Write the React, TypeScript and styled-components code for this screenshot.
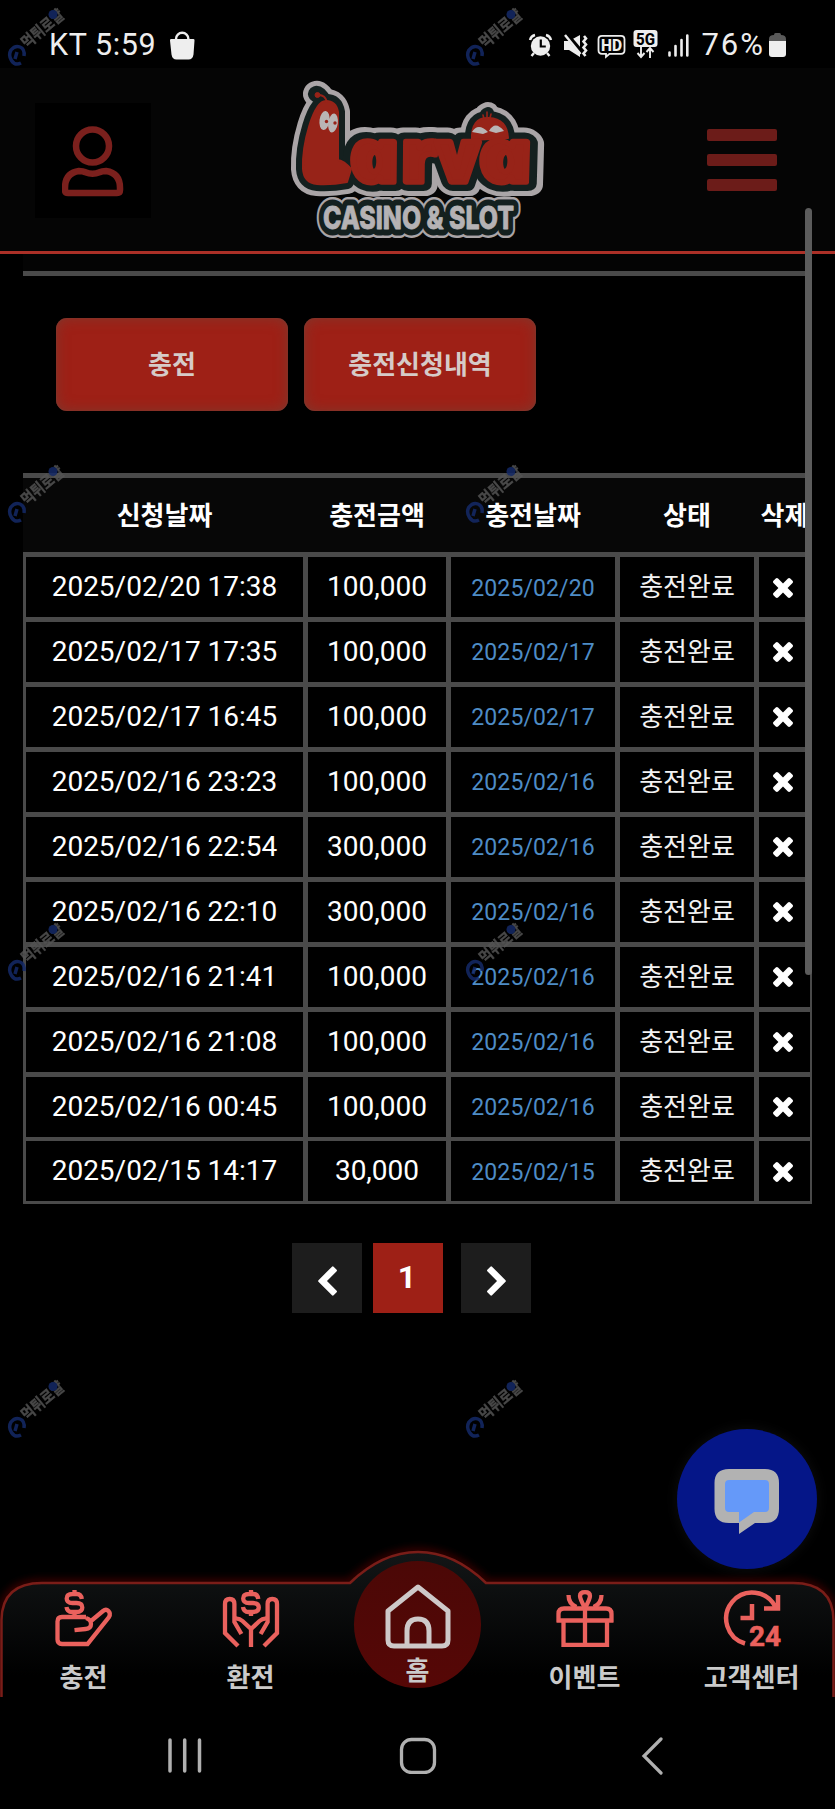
import React from 'react';
import styled, { createGlobalStyle } from 'styled-components';

const GlobalStyle = createGlobalStyle`
  * {
    box-sizing: border-box;
  }

  body {
    margin: 0;
    background: #000;
    font-family: Roboto, 'Noto Sans CJK KR', sans-serif;
    color: #fff;
  }
`;

const Screen = styled.div`
  position: relative;
  display: flex;
  flex-direction: column;
  width: 835px;
  height: 1809px;
  background: #000;
  overflow: hidden;
`;

const StatusBar = styled.div`
  display: flex;
  align-items: center;
  height: 68px;
  padding: 22px 48px 0 49px;
  color: #eee;
`;

const StatusText = styled.span<{ $battery?: boolean }>`
  margin-left: ${props => (props.$battery ? '9px' : '0')};
  font-size: ${props => (props.$battery ? '31px' : '30.5px')};
  line-height: 44px;
  height: 44px;
  letter-spacing: ${props => (props.$battery ? '2px' : '0.6px')};
  white-space: nowrap;
`;

const StatusIcons = styled.div`
  display: flex;
  align-items: center;
  margin-left: auto;
`;

const Header = styled.header`
  display: flex;
  align-items: flex-start;
  justify-content: space-between;
  height: 186px;
  padding: 35px 58px 0 35px;
  background: #050505;
  border-bottom: 3px solid #ab3027;
`;

const UserButton = styled.button`
  display: flex;
  align-items: center;
  justify-content: center;
  width: 116px;
  height: 115px;
  padding: 1px 0 0;
  background: #000;
  border: none;
`;

const LogoWrap = styled.div`
  margin-top: -33px;
  margin-left: -22px;
  height: 175px;
`;

const MenuButton = styled.button`
  display: flex;
  flex-direction: column;
  gap: 13px;
  width: 70px;
  margin-top: 26px;
  padding: 0;
  background: none;
  border: none;
`;

const MenuLine = styled.span`
  height: 12px;
  background: #6c1c19;
  border-radius: 2px;
`;

const Content = styled.main`
  height: 1298px;
  padding: 0 23px;
`;

const TopStrip = styled.div`
  height: 22px;
  background: #040404;
  border-bottom: 5px solid #4a4a4a;
`;

const TabRow = styled.div`
  display: flex;
  gap: 16px;
  padding: 42px 33px 62px;
`;

const Tab = styled.button`
  width: 232px;
  height: 93px;
  padding: 0 0 4px;
  border: none;
  border-radius: 11px;
  background: #9e2016;
  box-shadow: inset 0 0 14px rgba(110, 70, 60, 0.6), inset 0 0 2px rgba(110, 70, 60, 0.9);
  color: #d6cbc8;
  font-family: inherit;
  font-size: 26px;
  font-weight: 700;
`;

const columns = '277px 138px 164px 134px 51px';

const TableHead = styled.div`
  display: grid;
  grid-template-columns: ${columns};
  column-gap: 5px;
  height: 79px;
  padding: 0 2px 0 3px;
  background: #070707;
  border-top: 5px solid #4a4a4a;
`;

const HeadCell = styled.div`
  display: flex;
  align-items: center;
  justify-content: center;
  padding-bottom: 4px;
  font-size: 26px;
  font-weight: 700;
  white-space: nowrap;
`;

const TableBody = styled.div`
  display: grid;
  grid-template-columns: ${columns};
  grid-auto-rows: 60px;
  gap: 4.95px 5px;
  padding: 5px 2px 3px 3px;
  background: #4a4a4a;
`;

const Cell = styled.div`
  display: flex;
  align-items: center;
  justify-content: center;
  background: #000;
  font-size: 28px;
  line-height: 60px;
  white-space: nowrap;
`;

const DateLink = styled.a`
  padding-top: 3px;
  color: #4e8cc6;
  font-size: 23px;
  letter-spacing: 0.1px;
`;

const State = styled.span`
  color: #f2f2f2;
  font-size: 26px;
`;

const Pagination = styled.nav`
  display: flex;
  margin: 39px 0 0 269px;
`;

const PageButton = styled.button<{ $active?: boolean }>`
  display: flex;
  align-items: center;
  justify-content: center;
  width: 70px;
  height: 70px;
  padding: ${props => (props.$active ? '0 2px 2px 0' : '5px 0 0')};
  margin-right: ${props => (props.$active ? '18px' : '11px')};
  border: none;
  background: ${props => (props.$active ? '#9e2016' : '#1d1d1d')};
  color: #fff;
  font-family: inherit;
  font-size: 32px;
  font-weight: 700;
`;

const BottomNav = styled.nav`
  position: relative;
  display: grid;
  grid-template-columns: repeat(5, 1fr);
  height: 145px;
`;

const NavShape = styled.svg`
  position: absolute;
  left: 0;
  top: -12px;
`;

const NavItem = styled.a<{ $home?: boolean }>`
  position: relative;
  display: flex;
  flex-direction: column;
  align-items: center;
  padding-top: ${props => (props.$home ? '32px' : '38px')};
  color: #cacaca;
  font-size: 26px;
  font-weight: 700;
  line-height: 30px;

  svg {
    overflow: visible;
  }

  span {
    margin-top: ${props => (props.$home ? '7px' : '16px')};
  }
`;

const SystemNav = styled.div`
  display: flex;
  align-items: flex-start;
  gap: 196px;
  padding: 40px 0 0 167px;
  height: 112px;

  svg:last-child {
    margin-left: 7px;
  }
`;

const ChatButton = styled.button`
  position: absolute;
  left: 677px;
  top: 1429px;
  width: 140px;
  height: 140px;
  padding: 0;
  border: none;
  border-radius: 50%;
  background: #051688;
  box-shadow: 0 0 14px rgba(30, 30, 30, 0.5);
`;

const ScrollThumb = styled.div`
  position: absolute;
  left: 805px;
  top: 208px;
  width: 7px;
  height: 767px;
  border-radius: 4px;
  background: #5c5c5c;
`;

const Mark = styled.svg`
  position: absolute;
  overflow: visible;
  opacity: 0.85;
  pointer-events: none;
`;

const rows = [
  { requested: '2025/02/20 17:38', amount: '100,000', date: '2025/02/20' },
  { requested: '2025/02/17 17:35', amount: '100,000', date: '2025/02/17' },
  { requested: '2025/02/17 16:45', amount: '100,000', date: '2025/02/17' },
  { requested: '2025/02/16 23:23', amount: '100,000', date: '2025/02/16' },
  { requested: '2025/02/16 22:54', amount: '300,000', date: '2025/02/16' },
  { requested: '2025/02/16 22:10', amount: '300,000', date: '2025/02/16' },
  { requested: '2025/02/16 21:41', amount: '100,000', date: '2025/02/16' },
  { requested: '2025/02/16 21:08', amount: '100,000', date: '2025/02/16' },
  { requested: '2025/02/16 00:45', amount: '100,000', date: '2025/02/16' },
  { requested: '2025/02/15 14:17', amount: '30,000', date: '2025/02/15' },
];

const headings = ['신청날짜', '충전금액', '충전날짜', '상태', '삭제'];

const markPositions = [0, 457, 915, 1372].flatMap(top => [
  { top, left: 0 },
  { top, left: 458 },
]);

const BagIcon = () => (
  <svg width="27" height="29" viewBox="0 0 27 29" style={{ marginLeft: 13 }}>
    <path d="M7 10V8a6.2 6.2 0 0 1 12.4 0v2" fill="none" stroke="#eee" strokeWidth="2.4" />
    <path d="M2 8h22.500q1.300 0 1 1.500l-1 14q-.8 5-5 5H7.500q-4.200 0-5-5L1 9.500Q.7 8 2 8z" fill="#eee" />
  </svg>
);

// alarm, mute, HD voice, 5G and signal bars share one strip
const SignalIcons = () => (
  <svg width="164" height="32" viewBox="528 28 164 32" fill="#eee">
    <circle cx="540.500" cy="45" r="9.700" />
    <path d="M530 39q1-4 5-5M551 39q-1-4-5-5M534 52l-2.500 3M547 52l2.500 3" stroke="#eee" strokeWidth="2.400" fill="none" />
    <path d="M540.800 38.500v7h5" stroke="#000" strokeWidth="2.200" fill="none" />

    <path d="M564 40h5l11-6v22l-11-7h-5z" />
    <path d="M566 33l17 20" stroke="#000" strokeWidth="5" />
    <path d="M565 34l15.500 19" stroke="#eee" strokeWidth="2.400" />
    <path d="M584 35l2 2.500-2.500 3 2.500 3-2.500 3 2.500 3-2.500 3 2 2.500" stroke="#eee" strokeWidth="2.600" fill="none" />

    <path d="M602 34.800h19q3.500 0 3.500 3.500v11q0 3.500-3.500 3.500h-11.500l-3.500 3v-3h-4q-3.500 0-3.500-3.500v-11q0-3.500 3.500-3.500z" fill="none" stroke="#eee" strokeWidth="1.800" />
    <text x="601" y="49.500" fontFamily="Roboto, sans-serif" fontWeight="800" fontSize="16" textLength="21" lengthAdjust="spacingAndGlyphs">HD</text>

    <rect x="633.500" y="29" width="24" height="17" rx="3" />
    <text x="636" y="43.500" fontFamily="Roboto, sans-serif" fontWeight="800" fontSize="16" textLength="19" lengthAdjust="spacingAndGlyphs" fill="#000">5G</text>
    <path d="M641 46v9.500M637.500 52l3.500 4 3.500-4M650 57v-9.500M646.500 51l3.500-4 3.500 4" stroke="#eee" strokeWidth="1.900" fill="none" />

    <path d="M669.500 51.500v3M675.500 45v9.500M681.500 39v15.500M687.300 34.500v20" stroke="#eee" strokeWidth="2.600" strokeLinecap="round" />
  </svg>
);

const BatteryIcon = () => (
  <svg width="18" height="26" viewBox="0 0 18 26" style={{ marginLeft: 4 }}>
    <path d="M5 3q0-2 1.500-2h4q1.500 0 1.500 2 5 0 5 4v3H0V7q0-4 5-4z" fill="#5a5a5a" />
    <path d="M0 9h17v13q0 3-3 3H3q-3 0-3-3z" fill="#eee" />
  </svg>
);

const UserIcon = () => (
  <svg width="62" height="71" viewBox="0 0 62 71" fill="none" stroke="#7b201d" strokeWidth="6.500">
    <circle cx="30.500" cy="20" r="16.500" />
    <path d="M17 45q4 0 6.500 1.200 7 3 14 0Q40 45 44 45q14 2 14 17v2q0 3-3 3H6q-3 0-3-3v-2q0-15 14-17z" strokeLinejoin="round" />
  </svg>
);

const Logo = () => (
  <svg width="275" height="175" viewBox="0 0 275 175">
    <defs>
      <g id="worms">
        <path d="M45 31C32 31 21 75 22 99Q23 113 36 114Q50 115 66 112L70 99Q63 91 57 90L57 42Q55 31 45 31z" />
        <path d="M191 70Q190 47 208 48Q226 49 227 68z" />
      </g>
      {/* the skew stands the italic letters upright */}
      <g id="letters" transform="translate(0 112) skewX(13)" fontFamily="'Open Sans', sans-serif" fontStyle="italic" fontWeight="800" fontSize="73">
        <text x="73" y="0" textLength="50" lengthAdjust="spacingAndGlyphs">a</text>
        <text x="124" y="0" textLength="36" lengthAdjust="spacingAndGlyphs">r</text>
        <text x="161" y="0" textLength="42" lengthAdjust="spacingAndGlyphs">v</text>
        <text x="202" y="0" textLength="54" lengthAdjust="spacingAndGlyphs">a</text>
      </g>
      <text id="sub" x="42" y="159" fontFamily="Inter, sans-serif" fontWeight="800" fontSize="31" textLength="191" lengthAdjust="spacingAndGlyphs">CASINO &amp; SLOT</text>
    </defs>
    <g strokeLinejoin="round" strokeLinecap="round">
      <g fill="#aaa5a7" stroke="#aaa5a7">
        <path d="M43 32Q38 23 35 24" strokeWidth="26" fill="none" />
        <path d="M205 44l2-1" strokeWidth="22" />
        <use href="#worms" strokeWidth="24" />
        <use href="#letters" strokeWidth="28" />
      </g>
      <g fill="#14201f" stroke="#14201f">
        <path d="M43 32Q38 23 35 24" strokeWidth="16" fill="none" />
        <path d="M205 44l2-1" strokeWidth="12" />
        <use href="#worms" strokeWidth="14" />
        <use href="#letters" strokeWidth="18" />
      </g>
      <g fill="#972318" stroke="#972318">
        <use href="#worms" strokeWidth="2" />
        <use href="#letters" strokeWidth="5.500" />
        <path d="M46 32Q44 24 36 25" strokeWidth="2" fill="none" />
        <circle cx="36.500" cy="25" r="2.500" />
        <path d="M203 49l-1-4M206 48v-6M209 48l1-4" strokeWidth="1.600" />
      </g>
      <g fill="#b9b5b5">
        <ellipse cx="43.500" cy="50.500" rx="5" ry="9.500" transform="rotate(8 43.500 50.500)" />
        <ellipse cx="52" cy="53" rx="4.800" ry="9.500" transform="rotate(8 52 53)" />
        <path d="M191 62q6-10 16 0l-5 2zM208 61q6-11 15 0l-8 2z" />
      </g>
      <g fill="#972318">
        <circle cx="45.500" cy="51.500" r="1.700" />
        <circle cx="54" cy="53" r="1.700" />
      </g>
      <use href="#sub" fill="#aaa5a7" stroke="#aaa5a7" strokeWidth="18" />
      <use href="#sub" fill="#14201f" stroke="#14201f" strokeWidth="13" />
      <use href="#sub" fill="#b5b2b4" stroke="#b5b2b4" strokeWidth="0.800" />
    </g>
  </svg>
);

const CloseIcon = () => (
  <svg width="20" height="20" viewBox="110 366 1188 1188" fill="#fff" style={{ marginTop: 1, marginRight: 3 }}>
    <path d="M1298 1322q0 40-28 68l-136 136q-28 28-68 28t-68-28l-294-294-294 294q-28 28-68 28t-68-28l-136-136q-28-28-28-68t28-68l294-294-294-294q-28-28-28-68t28-68l136-136q28-28 68-28t68 28l294 294 294-294q28-28 68-28t68 28l136 136q28 28 28 68t-28 68l-294 294 294 294q28 28 28 68z" />
  </svg>
);

const Chevron: React.FC<{ flip?: boolean }> = ({ flip }) => (
  <svg width="19" height="30" viewBox="404 26 1042 1612" fill="#fff" transform={flip ? 'scale(-1 1)' : undefined}>
    <path d="M1427 301l-531 531 531 531q19 19 19 45t-19 45l-166 166q-19 19-45 19t-45-19l-742-742q-19-19-19-45t19-45l742-742q19-19 45-19t45 19l166 166q19 19 19 45t-19 45z" />
  </svg>
);

const DollarSign = () => (
  <path d="M27.800 9q-.8-5-4.800-5h-4.500q-5.800 0-5.800 4.500t5.800 4.500h4q5.800 0 5.800 4.500t-5.800 4.500h-4.500q-4.900 0-5.500-5M20.500 0v4M20.500 21v5" />
);

const DepositIcon = () => (
  <svg width="58" height="57" viewBox="0 0 58 57" fill="none" stroke="#ea615d" strokeWidth="4.300">
    <g transform="translate(-1 0)"><DollarSign /></g>
    <path d="M19.500 40.200l11-1.200q5.500-.5 5.500-5 0-4.500-5-6" />
    <path d="M36 31.500L48 21.500q3-2.500 5.500 0t.5 6L32.500 54.500H7Q2.500 54.500 2.500 50V32Q2.500 27.500 7 27.500h24" transform="translate(0 -.5)" />
  </svg>
);

const WithdrawIcon = () => (
  <svg width="58" height="57" viewBox="0 0 58 57" fill="none" stroke="#ea615d" strokeWidth="4.300">
    <g transform="translate(8.500 0)"><DollarSign /></g>
    <path d="M16 56L3 43V14q0-5 4.700-5t4.700 5v18l7 12M12.500 29q4-1.500 8 2l8.500 8v18" />
    <path d="M42 56L55 43V14q0-5-4.700-5t-4.700 5v18l-7 12M45.500 29q-4-1.500-8 2l-8.500 8" />
  </svg>
);

const HomeIcon = () => (
  <svg width="66" height="65" viewBox="0 0 66 65" fill="none" stroke="#cec9c9" strokeWidth="5">
    <path d="M3 27L33 3l30 24v29q0 6-6 6H9q-6 0-6-6z" strokeLinejoin="round" />
    <path d="M22 62V47q0-12 11-12t11 12v15" />
  </svg>
);

const GiftIcon = () => (
  <svg width="58" height="57" viewBox="0 0 58 57" fill="none" stroke="#ea615d" strokeWidth="4.300">
    <path d="M2.500 32V24q0-5.500 5.500-5.500h42q5.500 0 5.500 5.500v8M.5 30.500h57M7.500 31v23.800h43.500V31M29 18v37" />
    <path d="M29 18q-5-9-5-12 0-3.800 5-3.800T34 6q0 3-5 12zM12.500 5q0 9 8 12M45.500 5q0 9-8 12" />
  </svg>
);

const SupportIcon = () => (
  <svg width="58" height="57" viewBox="0 0 58 57" fill="none" stroke="#ea615d" strokeWidth="4.500">
    <path d="M22 53.500A26 26 0 1 1 52.500 17M55 5v13.500H41M29 14v14H17.500" />
    <text x="26" y="56" fill="#ea615d" stroke="#ea615d" strokeWidth="0.600" fontFamily="Roboto, sans-serif" fontWeight="700" fontSize="28" textLength="32" lengthAdjust="spacingAndGlyphs">24</text>
  </svg>
);

const navItems = [
  { label: '충전', icon: <DepositIcon /> },
  { label: '환전', icon: <WithdrawIcon /> },
  { label: '홈', icon: <HomeIcon />, home: true },
  { label: '이벤트', icon: <GiftIcon /> },
  { label: '고객센터', icon: <SupportIcon /> },
];

const navOutline = 'M1.500 157V80Q2 43 42 43H350Q382 12 418 12T486 43H793Q833 43 833.500 80V157';

const App: React.FC = () => {
  return (
    <Screen>
      <GlobalStyle />
      <StatusBar>
        <StatusText>KT 5:59</StatusText>
        <BagIcon />
        <StatusIcons>
          <SignalIcons />
          <StatusText $battery>76%</StatusText>
          <BatteryIcon />
        </StatusIcons>
      </StatusBar>

      <Header>
        <UserButton>
          <UserIcon />
        </UserButton>
        <LogoWrap>
          <Logo />
        </LogoWrap>
        <MenuButton>
          <MenuLine />
          <MenuLine />
          <MenuLine />
        </MenuButton>
      </Header>

      <Content>
        <TopStrip />
        <TabRow>
          <Tab>충전</Tab>
          <Tab>충전신청내역</Tab>
        </TabRow>

        <TableHead>
          {headings.map(heading => (
            <HeadCell key={heading}>{heading}</HeadCell>
          ))}
        </TableHead>
        <TableBody>
          {rows.map(row => (
            <React.Fragment key={row.requested}>
              <Cell>{row.requested}</Cell>
              <Cell>{row.amount}</Cell>
              <Cell>
                <DateLink>{row.date}</DateLink>
              </Cell>
              <Cell>
                <State>충전완료</State>
              </Cell>
              <Cell>
                <CloseIcon />
              </Cell>
            </React.Fragment>
          ))}
        </TableBody>

        <Pagination>
          <PageButton>
            <Chevron />
          </PageButton>
          <PageButton $active>1</PageButton>
          <PageButton>
            <Chevron flip />
          </PageButton>
        </Pagination>
      </Content>

      <BottomNav>
        <NavShape width="835" height="157" viewBox="0 0 835 157">
          <defs>
            <linearGradient id="navFill" x1="0" y1="0" x2="0" y2="1">
              <stop offset="0" stopColor="#131617" />
              <stop offset="0.85" stopColor="#000" />
            </linearGradient>
            <linearGradient id="homeFill" x1="0" y1="0" x2="0" y2="1">
              <stop offset="0" stopColor="#4b0806" />
              <stop offset="1" stopColor="#560706" />
            </linearGradient>
            <filter id="glow" x="-5%" y="-20%" width="110%" height="140%">
              <feGaussianBlur stdDeviation="4" />
            </filter>
          </defs>
          <path d={navOutline} fill="none" stroke="#5a0d08" strokeWidth="5" filter="url(#glow)" />
          <path d={navOutline} fill="url(#navFill)" stroke="#7a1d18" strokeWidth="2.500" />
          <circle cx="417.500" cy="84.500" r="63.500" fill="url(#homeFill)" />
        </NavShape>
        {navItems.map(item => (
          <NavItem key={item.label} $home={item.home}>
            {item.icon}
            <span>{item.label}</span>
          </NavItem>
        ))}
      </BottomNav>

      <SystemNav>
        <svg width="36" height="37" viewBox="0 0 36 37" stroke="#b0b0b0" strokeWidth="3.500" strokeLinecap="round">
          <path d="M3 3v31M17.700 3v31M32.500 3v31" />
        </svg>
        <svg width="38" height="37" viewBox="0 0 38 37" fill="none" stroke="#b0b0b0" strokeWidth="3.300">
          <rect x="2.500" y="2.500" width="33" height="33" rx="10" />
        </svg>
        <svg width="24" height="40" viewBox="0 0 24 40" fill="none" stroke="#b0b0b0" strokeWidth="3.200" strokeLinecap="round">
          <path d="M21 2L4 19l17 17" />
        </svg>
      </SystemNav>

      <ScrollThumb />

      <ChatButton>
        <svg width="140" height="140" viewBox="0 0 140 140">
          <path d="M52 40h36q14 0 14 14v26q0 14-14 14h-10l-16 11V94H52Q37.500 94 37.500 80V54q0-14 14.500-14z" fill="#b2b2b2" />
          <path d="M52 51h36q4 0 4 4v24q0 4-4 4h-11l-15 10.500V83H52q-4 0-4-4V55q0-4 4-4z" fill="#6599f9" />
        </svg>
      </ChatButton>

      {markPositions.map(({ left, top }) => (
        <Mark key={`${left}-${top}`} width="75" height="75" style={{ left, top }}>
          <path d="M21 63q-6 3-9.500-2.500T11 50q4-5 9-3t4 9M17 52l-2 7" fill="none" stroke="#142a68" strokeWidth="3.500" />
          <text transform="translate(27 49) rotate(-40)" fill="#555" stroke="#555" strokeWidth="0.400" fontFamily="'Noto Sans CJK KR', sans-serif" fontWeight="700" fontSize="16" textLength="50" lengthAdjust="spacingAndGlyphs">먹튀로얄</text>
          <circle cx="53" cy="14.500" r="4.500" fill="#142a68" />
        </Mark>
      ))}
    </Screen>
  );
};

export default App;
